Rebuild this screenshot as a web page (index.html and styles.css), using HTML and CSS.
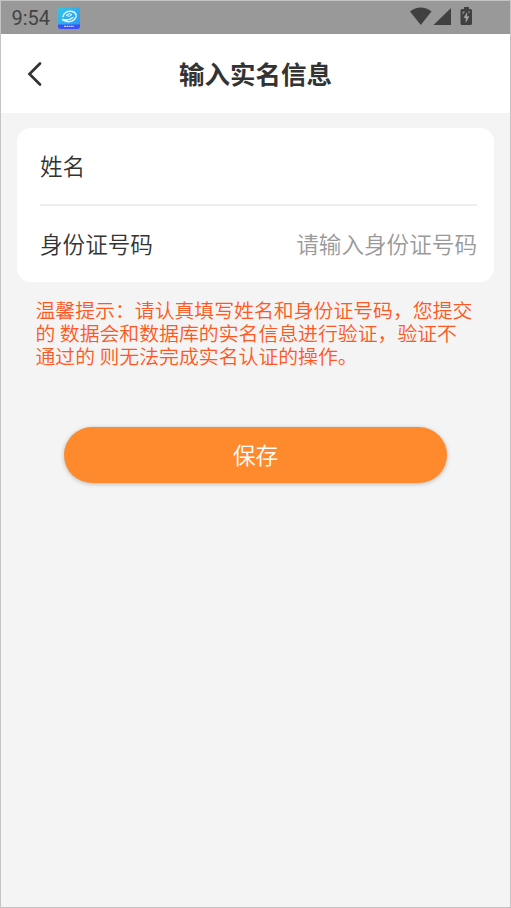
FILE: index.html
```html
<!DOCTYPE html>
<html lang="zh-CN">
<head>
<meta charset="utf-8">
<title>输入实名信息</title>
<link rel="stylesheet" href="styles.css">
</head>
<body>
<div class="screen">
  <div class="status">
    <span class="time">9:54</span>
    <svg class="app-icon" width="22" height="22" viewBox="0 0 22 22">
      <defs>
        <linearGradient id="sky" x1="0" y1="0" x2="1" y2="1"><stop offset="0" stop-color="#35c5e4"/><stop offset="1" stop-color="#2b96f5"/></linearGradient>
        <clipPath id="tile"><rect width="22" height="22" rx="3"/></clipPath>
      </defs>
      <g clip-path="url(#tile)">
        <rect width="22" height="22" fill="url(#sky)"/>
        <path d="M0 17.500H22V22H0Z" fill="#3e50f0"/>
        <path d="M5 9.500C6 5.500 10 3.700 14 4.500C18.500 5.500 19.500 9.500 16.500 12.500C13.500 15.500 8 15.500 4 12.500C8 13.500 12 13 15 10.500" fill="none" stroke="#e9fbff" stroke-width="1.400" stroke-linecap="round"/>
        <path d="M8 8.500Q11 5.500 14 7.500Q12 10.500 8 8.500" fill="none" stroke="#e9fbff" stroke-width="1"/>
        <path d="M6 19.300H16" stroke="#c9d2ff" stroke-width="1.200" stroke-dasharray="1.800 .5"/>
      </g>
    </svg>
    <svg class="signals" width="64" height="20" viewBox="0 0 64 20" fill="#404040">
      <path d="M0 4.500C6.300-.7 15.200-.7 21.500 4.500L10.750 18Z"/>
      <path d="M41 1V18H23.500Z"/>
      <path fill-rule="evenodd" d="M52 2H54V0H59V2H60.500Q62 2 62 3.500V16.500Q62 18 60.500 18H52Q50.500 18 50.500 16.500V3.500Q50.500 2 52 2Z"/>
      <path d="M57.100 5L53.500 11H55.700V16L59.400 9.300H57.100Z" fill="#a0a0a0"/>
      <path d="M52.500 4.500H55.300L52.500 8ZM58 4.500H60.500L58.800 6.500Z" fill="#858585"/>
    </svg>
  </div>
  <header class="header">
    <svg class="back" width="16" height="26" viewBox="0 0 16 26"><path d="M13 2.500L2.500 13L13 23.500" fill="none" stroke="#333" stroke-width="2.700" stroke-linecap="round" stroke-linejoin="miter"/></svg>
    <h1 class="title">输入实名信息</h1>
  </header>
  <main class="content">
    <div class="card">
      <div class="row"><span>姓名</span></div>
      <div class="row"><span>身份证号码</span><span class="placeholder">请输入身份证号码</span></div>
    </div>
    <p class="tip">温馨提示：请认真填写姓名和身份证号码，您提交<br>的 数据会和数据库的实名信息进行验证，验证不<br>通过的 则无法完成实名认证的操作。</p>
    <button class="save">保存</button>
  </main>
</div>
</body>
</html>
```
FILE: styles.css
```css
* { box-sizing: border-box; }
body {
  margin: 0;
  font-family: "Noto Sans CJK SC", sans-serif;
  color: #333;
}
.screen {
  height: 908px;
  background: #f4f4f4;
  border: 1px solid #c4c4c4;
  overflow: hidden;
}
.status {
  height: 33px;
  background: #999;
  display: flex;
  align-items: center;
  padding: 0 36.5px 0 10.5px;
}
.time {
  width: 46.5px;
  font: 20px/33px Roboto, sans-serif;
  color: #444;
  padding-top: 1px;
}
.signals { margin-left: auto; margin-top: -1px; }
.header {
  height: 79px;
  background: #fff;
  display: grid;
  grid-template-columns: 80px 1fr 80px;
  align-items: center;
}
.back { margin-left: 26px; }
.title {
  margin: 0;
  padding-bottom: 2px;
  text-align: center;
  font-size: 25.5px;
  line-height: 38px;
  font-weight: 700;
}
.content { padding: 15px 16px; }
.card {
  height: 154px;
  background: #fff;
  border-radius: 14px;
  padding: 0 17px 0 23px;
}
.row {
  height: 76px;
  padding-bottom: 2px;
  display: flex;
  align-items: center;
  justify-content: space-between;
  font-size: 22.6px;
  font-weight: 350;
}
.row + .row { height: 78px; border-top: 2px solid #eee; }
.placeholder { color: #999; }
.tip {
  margin: 16px 0 0 18.5px;
  font-size: 19.870px;
  line-height: 23px;
  font-weight: 350;
  color: #ff5722;
  white-space: nowrap;
}
.save {
  display: block;
  width: 383px;
  height: 56px;
  margin: 60px auto 0;
  padding: 0;
  border: 0;
  border-radius: 28px;
  background: #ff8a2d;
  box-shadow: 0 1px 4px rgba(0, 0, 0, .25);
  color: #fff;
  font: 350 22.6px/56px "Noto Sans CJK SC", sans-serif;
}
```
